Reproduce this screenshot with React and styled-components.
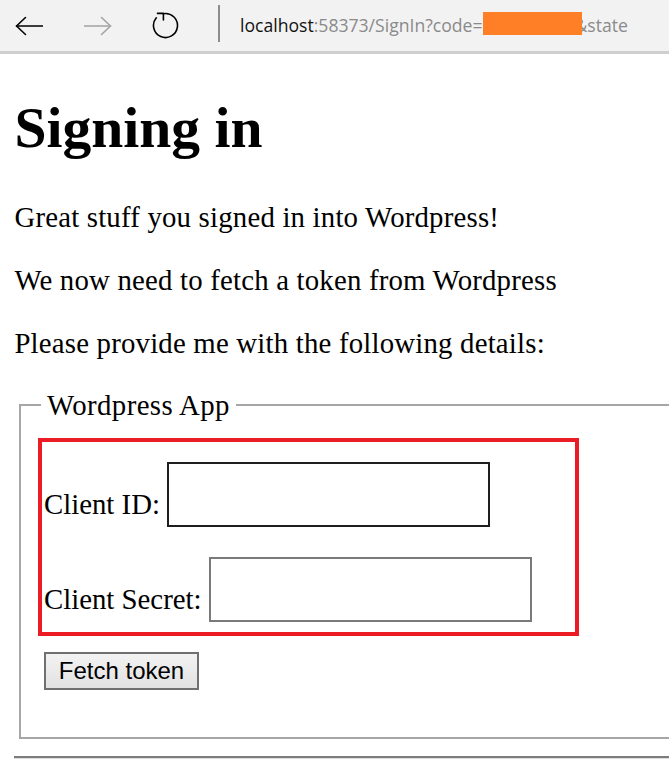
import React from "react";
import styled, { createGlobalStyle } from "styled-components";

const Global = createGlobalStyle`
  html, body {
    margin: 0;
    padding: 0;
    overflow: hidden;
    background: #ffffff;
  }
  body {
    font-family: "Liberation Serif", "Times New Roman", serif;
    color: #000;
  }
`;

const Bar = styled.header`
  display: flex;
  align-items: center;
  height: 51px;
  padding-left: 15px;
  background: #f2f2f2;
  border-bottom: 3px solid #cfcfcf;
`;

const NavIcon = styled.span`
  display: flex;
  align-items: center;
  margin-right: ${(p) => p.$gap}px;
  svg {
    display: block;
  }
`;

const Divider = styled.span`
  width: 2px;
  height: 37px;
  background: #8c8c8c;
  margin-right: 20px;
  align-self: flex-start;
  margin-top: 5px;
`;

const Url = styled.div`
  display: flex;
  align-items: center;
  font-family: "Open Sans", "Noto Sans", sans-serif;
  font-size: 17.6px;
  line-height: 23px;
  color: #8a8a8a;
  white-space: nowrap;
`;

const Host = styled.span`
  color: #111;
`;

const Redact = styled.span`
  display: inline-block;
  width: 99px;
  height: 23px;
  background: #ff7f27;
  margin-right: -7px;
  position: relative;
  top: -2px;
  z-index: 1;
`;

const Main = styled.main`
  padding-left: 14.4px;
`;

const Title = styled.h1`
  font-size: 57.6px;
  font-weight: bold;
  line-height: 66px;
  margin: 40.6px 0 40px;
`;

const Para = styled.p`
  font-size: 28.8px;
  line-height: 33px;
  letter-spacing: 0.2px;
  margin: 0 0 ${(p) => (p.$last ? 29 : 30)}px;
`;

const Field = styled.fieldset`
  margin: 0 -60px 0 4.6px;
  border: 2px solid #a6a6a6;
  padding: 16.4px 0 47px 17px;
  min-width: 0;
`;

const Legend = styled.legend`
  font-size: 28.8px;
  line-height: 33px;
  letter-spacing: 0.4px;
  padding: 0 6px;
  margin-left: 3px;
`;

const Highlight = styled.div`
  box-sizing: border-box;
  width: 541px;
  border: 4px solid #ec1c24;
  padding: 20px 0 10px 2px;
  display: flex;
  flex-direction: column;
  gap: 30px;
`;

const Row = styled.div`
  display: flex;
  align-items: flex-end;
  gap: 7.5px;
`;

const Label = styled.label`
  font-size: 28.8px;
  line-height: 33px;
  margin-bottom: 5.5px;
`;

const Input = styled.input`
  box-sizing: border-box;
  width: 323px;
  height: 65px;
  border: 2px solid ${(p) => p.$border};
  background: #fff;
  outline: none;
  padding: 0 4px;
  margin: 0;
`;

const Button = styled.button`
  box-sizing: border-box;
  margin: 16px 0 0 6px;
  width: 155px;
  height: 38px;
  padding: 0;
  border: 2px solid #707070;
  border-radius: 0;
  background: linear-gradient(#f3f3f3, #e2e2e2);
  font-family: "Liberation Sans", Arial, sans-serif;
  font-size: 24px;
  color: #000;
  display: block;
`;

const Rule = styled.hr`
  border: none;
  height: 0;
  border-top: 2px solid #7d7d7d;
  border-bottom: 1px solid #dcdcdc;
  margin: 17px -60px 0 0;
`;

const Arrow = ({ color, flip }) => (
  <svg
    width="28"
    height="20"
    viewBox="0 0 28 20"
    style={flip ? { transform: "scaleX(-1)" } : undefined}
  >
    <g fill="none" stroke={color} strokeWidth="1.6" strokeLinecap="round" strokeLinejoin="round">
      <line x1="1.5" y1="10" x2="27.5" y2="10" />
      <polyline points="10.5,1.5 1.5,10 10.5,18.5" />
    </g>
  </svg>
);

const Refresh = () => (
  <svg width="27" height="27" viewBox="0 0 27 27">
    <g fill="none" stroke="#000" strokeWidth="1.6" strokeLinecap="round" strokeLinejoin="round">
      <path d="M11.4 1.7 A12 12 0 1 1 4.3 5.8" />
      <polyline points="5.5,1.4 11.4,1.4 11.4,8" />
    </g>
  </svg>
);

export default function App() {
  return (
    <>
      <Global />
      <Bar>
        <NavIcon $gap={41}>
          <Arrow color="#000" />
        </NavIcon>
        <NavIcon $gap={40}>
          <Arrow color="#a3a3a3" flip />
        </NavIcon>
        <NavIcon $gap={39}>
          <Refresh />
        </NavIcon>
        <Divider />
        <Url>
          <Host>localhost</Host>
          <span>:58373/SignIn?code=</span>
          <Redact />
          <span>&amp;state</span>
        </Url>
      </Bar>
      <Main>
        <Title>Signing in</Title>
        <Para>Great stuff you signed in into Wordpress!</Para>
        <Para>We now need to fetch a token from Wordpress</Para>
        <Para $last>Please provide me with the following details:</Para>
        <Field>
          <Legend>Wordpress App</Legend>
          <Highlight>
            <Row>
              <Label htmlFor="cid">Client ID:</Label>
              <Input id="cid" type="text" $border="#1f1f1f" />
            </Row>
            <Row>
              <Label htmlFor="csec">Client Secret:</Label>
              <Input id="csec" type="text" $border="#7a7a7a" />
            </Row>
          </Highlight>
          <Button type="button">Fetch token</Button>
        </Field>
        <Rule />
      </Main>
    </>
  );
}
